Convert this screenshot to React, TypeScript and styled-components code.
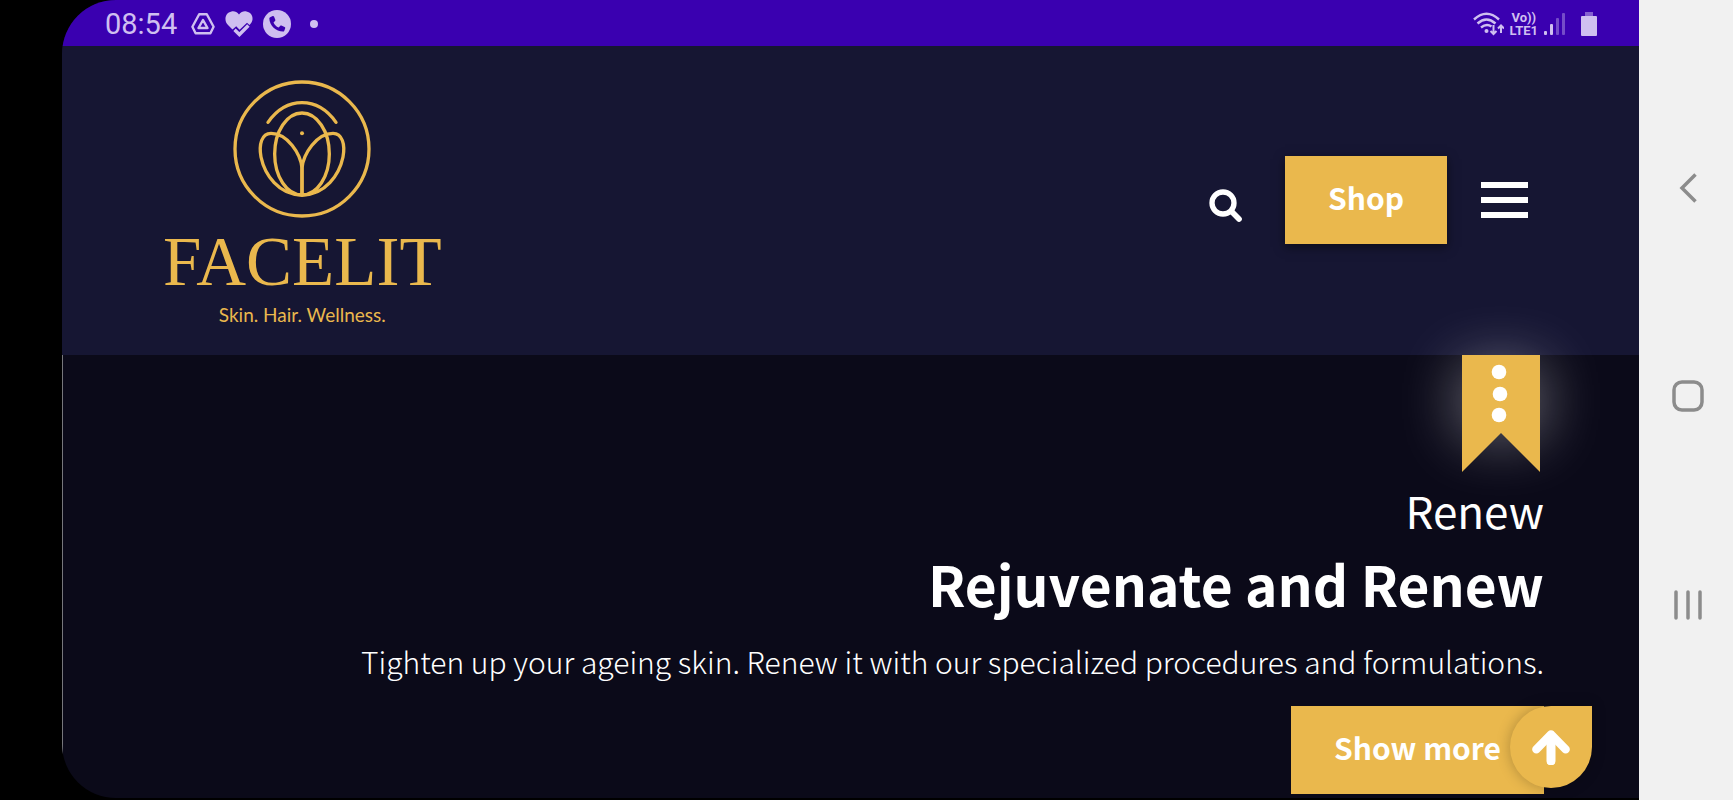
import React from "react";
import styled, { createGlobalStyle } from "styled-components";

const gold = "#eab84d";
const sans = `"Noto Sans CJK SC", "Noto Sans", sans-serif`;

const GlobalStyle = createGlobalStyle`
  *, *::before, *::after { box-sizing: border-box; }
  body { margin: 0; background: #000; color: #fff; font-family: ${sans}; }
  h1, h2, p { margin: 0; }
  button { border: 0; padding: 0; background: none; color: inherit; font: inherit; cursor: pointer; }
  a { color: inherit; text-decoration: none; }
  svg { display: block; }
`;

const Device = styled.div`
  display: flex;
  min-height: 100vh;
  padding-left: 62px;
  background: #000;
`;

const Screen = styled.div`
  position: relative;
  flex: 1;
  min-width: 0;
  display: flex;
  flex-direction: column;
  margin-bottom: 2px;
  overflow: hidden;
  border-radius: 54px 0 0 54px;
  background: #0b0a19;
`;

const StatusBar = styled.div`
  display: flex;
  align-items: center;
  justify-content: space-between;
  height: 46px;
  padding: 2px 42px 0 43px;
  background: #3a00b0;
  color: #cfbff0;
`;

const StatusGroup = styled.div<{ $gap: number }>`
  display: flex;
  align-items: center;
  gap: ${(p) => p.$gap}px;
`;

const Clock = styled.time`
  margin-right: 4px;
  font: 400 29px/44px Roboto, sans-serif;
`;

const Network = styled.div`
  font: 700 13px/13px Roboto, sans-serif;
  text-align: center;
`;

const BatteryIcon = styled.svg`
  margin-left: 10px;
`;

const Header = styled.header`
  display: flex;
  align-items: center;
  justify-content: space-between;
  padding: 34px 111px 28px 101px;
  background: #161633;
`;

const Brand = styled.a`
  display: flex;
  flex-direction: column;
  align-items: center;
  color: ${gold};
`;

const Wordmark = styled.span`
  margin-top: 10px;
  font: 400 69px/68px "Liberation Serif", serif;
`;

const Tagline = styled.span`
  margin-top: 7px;
  font: 400 19px/24px Lato, sans-serif;
`;

const Actions = styled.nav`
  display: flex;
  align-items: center;
  margin-bottom: 8px;
`;

const SearchButton = styled.button`
  margin: 12px 43px 0 0;
`;

const GoldButton = styled.button`
  height: 88px;
  padding: 0 43px 6px;
  background: ${gold};
  color: #fff;
  font: 600 30px/40px ${sans};
  white-space: nowrap;
`;

const ShopButton = styled(GoldButton)`
  box-shadow: 0 3px 10px rgba(0, 0, 0, 0.5);
`;

const MenuButton = styled.button`
  display: flex;
  flex-direction: column;
  gap: 9px;
  width: 47px;
  margin-left: 34px;
`;

const MenuBar = styled.span`
  height: 6px;
  background: #fff;
`;

const Hero = styled.main`
  flex: 1;
  display: flex;
  flex-direction: column;
  align-items: flex-end;
  padding: 0 95px 4px 40px;
  border-left: 1px solid #77777c;
  text-align: right;
`;

const Ribbon = styled.button`
  position: relative;
  width: 78px;
  height: 117px;
  margin-right: 4px;

  &::before {
    content: "";
    position: absolute;
    inset: 10px 0 39px;
    box-shadow: 0 2px 60px 2px rgba(255, 255, 255, 0.42);
  }

  svg { position: relative; }
`;

const Eyebrow = styled.h2`
  margin-top: 8px;
  font: 400 44px/60px ${sans};
`;

const Title = styled.h1`
  margin-top: 7px;
  font: 700 55px/72px ${sans};
`;

const Lead = styled.p`
  margin: 22px 0 25px;
  font: 300 30px/40px ${sans};
`;

const ToTop = styled.button`
  position: absolute;
  right: 47px;
  bottom: 10px;
  display: grid;
  place-items: center;
  width: 82px;
  height: 82px;
  border-radius: 50% 0 50% 50%;
  background: ${gold};
  box-shadow: 0 0 14px rgba(0, 0, 0, 0.25);
`;

const SystemNav = styled.nav`
  display: grid;
  grid-template-rows: repeat(3, 1fr);
  width: 94px;
  padding: 84px 0 91px 4px;
  background: #f1f1f1;
`;

const NavKey = styled.button`
  display: grid;
  place-items: center;
`;

function LogoMark() {
  return (
    <svg width="138" height="138" viewBox="41 28 414 414" fill="none" stroke={gold} strokeWidth="10" strokeLinecap="round">
      <circle cx="248" cy="235" r="201" />
      <path d="M146 155C172 118 208 96 248 96S324 118 350 155" />
      <ellipse cx="248" cy="250" rx="82" ry="123" />
      <path d="M248 373V292C244 250 205 188 155 188C127 188 118 222 125 259C136 312 178 373 248 373" />
      <path d="M248 373V292C252 250 291 188 341 188C369 188 378 222 371 259C360 312 318 373 248 373" />
      <circle cx="248" cy="188" r="6" fill={gold} stroke="none" />
    </svg>
  );
}

export default function App() {
  return (
    <>
      <GlobalStyle />
      <Device>
        <Screen>
          <StatusBar>
            <StatusGroup $gap={10}>
              <Clock>08:54</Clock>
              <svg width="24" height="24" viewBox="0 0 24 24" fill="none" stroke="currentColor" strokeWidth="2.4" strokeLinejoin="round">
                <path d="M8.2 2.2h7.6l6.8 12.6-3.2 6.4H4.6l-3.2-6.4z" />
                <path d="M12 8l4.500 8h-9z" />
              </svg>
              <svg width="28" height="28" viewBox="0 0 28 28">
                <path fill="currentColor" d="M14 4.5C16 1.6 19 1 21.500 1.500C25.500 2.300 28 5.500 27.500 9.500C27.300 11.500 26 13.500 24.500 15L22 12.800L14.600 19.800L11.200 16.300L7.500 19.500L3 15C1.500 13.500.500 11.500.500 9.500C.200 5.500 2.500 2.300 6.500 1.500C9 1 12 1.600 14 4.500Z" />
                <path d="M9.500 19.800l4.900 4.700 9-9" fill="none" stroke="currentColor" strokeWidth="3.400" />
              </svg>
              <svg width="28" height="28" viewBox="0 0 28 28">
                <circle cx="14" cy="14" r="14" fill="currentColor" />
                <path fill="#3a00b0" d="M7.200 7.200l2.500-1.200c.6-.2 1 0 1.300.6l1.300 3.200c.2.500.1.900-.3 1.300l-1.500 1.400c1.200 2.400 2.700 3.900 5.100 5.100l1.500-1.700c.4-.4.800-.5 1.300-.3l3.200 1.300c.5.2.8.700.6 1.300l-.9 2.500c-.2.600-.6.900-1.300.9C13 21.500 6.500 15.500 6.300 8.500c0-.6.300-1 .9-1.300z" />
              </svg>
              <svg width="28" height="8" viewBox="0 0 28 8">
                <circle cx="13" cy="4" r="4" fill="currentColor" />
              </svg>
            </StatusGroup>
            <StatusGroup $gap={6}>
              <svg width="31" height="24" viewBox="0 0 31 24" fill="none" stroke="currentColor" strokeWidth="2.400">
                <path d="M1 7.500Q13.500-4 26 7.500M4.500 11.500Q13.500 3.500 22.500 11.500M8 15.500Q13.500 11 18.500 14.500" />
                <circle cx="13.500" cy="19" r="2" fill="currentColor" stroke="none" />
                <path d="M20.500 13v8.500M17.500 19l3 3 3-3M28 21v-7M25 16.500l3-3 3 3" strokeWidth="2" />
              </svg>
              <Network>Vo))<br />LTE1</Network>
              <svg width="21" height="24" viewBox="0 0 21 24" fill="currentColor">
                <rect y="19" width="3" height="4" rx="1" />
                <rect x="6" y="12" width="3" height="11" rx="1" />
                <rect x="12" y="6" width="3" height="17" rx="1" opacity=".4" />
                <rect x="18" y="1" width="3" height="22" rx="1" opacity=".4" />
              </svg>
              <BatteryIcon width="16" height="24" viewBox="0 0 16 24" fill="currentColor">
                <rect x="4" width="8" height="4" opacity=".5" />
                <rect y="4" width="16" height="20" rx="1" />
              </BatteryIcon>
            </StatusGroup>
          </StatusBar>

          <Header>
            <Brand href="#">
              <LogoMark />
              <Wordmark>FACELIT</Wordmark>
              <Tagline>Skin. Hair. Wellness.</Tagline>
            </Brand>
            <Actions>
              <SearchButton aria-label="Search">
                <svg width="33" height="33" viewBox="57 146 99 99" fill="none" stroke="#fff" strokeWidth="16" strokeLinecap="round">
                  <circle cx="99" cy="188" r="33" />
                  <path d="M124 213l23 23" strokeWidth="17" />
                </svg>
              </SearchButton>
              <ShopButton>Shop</ShopButton>
              <MenuButton aria-label="Menu">
                <MenuBar />
                <MenuBar />
                <MenuBar />
              </MenuButton>
            </Actions>
          </Header>

          <Hero>
            <Ribbon aria-label="More options">
              <svg width="78" height="117" viewBox="0 0 78 117">
                <path d="M0 0H78V117L39 78L0 117Z" fill={gold} />
                <g fill="#fff">
                  <circle cx="37" cy="17" r="7.300" />
                  <circle cx="38" cy="39" r="7.300" />
                  <circle cx="37" cy="60" r="7.300" />
                </g>
              </svg>
            </Ribbon>
            <Eyebrow>Renew</Eyebrow>
            <Title>Rejuvenate and Renew</Title>
            <Lead>Tighten up your ageing skin. Renew it with our specialized procedures and formulations.</Lead>
            <GoldButton>Show more</GoldButton>
          </Hero>

          <ToTop aria-label="Back to top">
            <svg width="38" height="36" viewBox="785 128 114 108" fill="none" stroke="#fff" strokeLinecap="round" strokeLinejoin="round">
              <path d="M798 189l44-45 44 45" strokeWidth="25" />
              <path d="M842 150v74" strokeWidth="27" />
            </svg>
          </ToTop>
        </Screen>

        <SystemNav aria-label="System">
          <NavKey aria-label="Back">
            <svg width="18" height="30" viewBox="0 0 18 30" fill="none" stroke="#8c8c8c" strokeWidth="3.500">
              <path d="M16.500 1.500L3 15l13.500 13.500" />
            </svg>
          </NavKey>
          <NavKey aria-label="Home">
            <svg width="32" height="32" viewBox="0 0 32 32" fill="none" stroke="#8c8c8c" strokeWidth="3.500">
              <rect x="2" y="2" width="28" height="28" rx="8" />
            </svg>
          </NavKey>
          <NavKey aria-label="Recent apps">
            <svg width="28" height="30" viewBox="0 0 28 30" fill="none" stroke="#8c8c8c" strokeWidth="3.500" strokeLinecap="round">
              <path d="M2 2v26M14 2v26M26 2v26" />
            </svg>
          </NavKey>
        </SystemNav>
      </Device>
    </>
  );
}
